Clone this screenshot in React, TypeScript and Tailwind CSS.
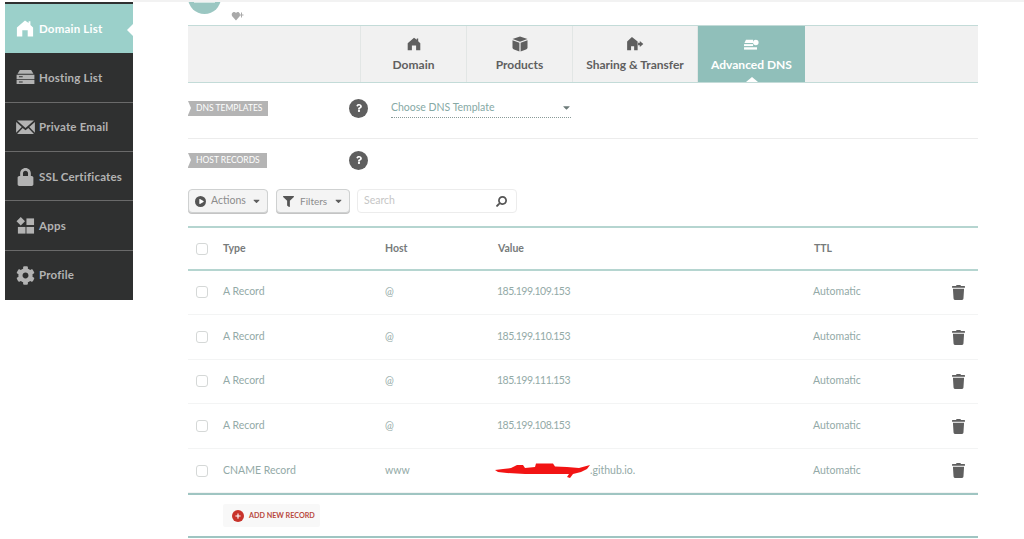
import { FaLock, FaCog, FaFilter, FaSearch, FaTrash, FaPlay, FaCaretDown, FaPlus, FaQuestion } from "react-icons/fa";

const FONT = "font-['Lato','Open_Sans',sans-serif]";

const HomeIcon = ({ className }: { className: string }) => (
	<svg viewBox="0 0 20 20" className={className} fill="currentColor">
		<path d="M10 1 L14 4 V2 H16 V6 L19 9 V19 H13 V12 H7 V19 H1 V9 Z" />
	</svg>
);

const ServerIcon = ({ className }: { className: string }) => (
	<svg viewBox="0 0 20 16" className={className} fill="currentColor">
		<path d="M4 0 H16 L18.5 4 H1.5 Z" />
		<path d="M0.5 5 H19.5 V9.5 H0.5 Z M3 6.6 V7.8 H7 V6.6 Z" fillRule="evenodd" />
		<path d="M0.5 10.5 H19.5 V15 H0.5 Z M3 12.2 V13.4 H7 V12.2 Z" fillRule="evenodd" />
	</svg>
);

const MailIcon = ({ className }: { className: string }) => (
	<svg viewBox="0 0 20 16" className={className} fill="currentColor">
		<path d="M1 0.5 H19 L10 8.5 Z" />
		<path d="M0 2 L6 7.5 L0 13.5 Z" />
		<path d="M20 2 L14 7.5 L20 13.5 Z" />
		<path d="M7 8.5 L10 11 L13 8.5 L19 15 H1 Z" />
	</svg>
);

const AppsIcon = ({ className }: { className: string }) => (
	<svg viewBox="0 0 20 20" className={className} fill="currentColor">
		<path d="M5 0.5 L9.5 5 L5 9.5 L0.5 5 Z" />
		<rect x="11" y="2" width="8" height="7" />
		<rect x="2" y="11" width="8" height="7" />
		<rect x="11" y="11" width="8" height="7" />
	</svg>
);

const BoxIcon = ({ className }: { className: string }) => (
	<svg viewBox="0 0 16 16" className={className} fill="currentColor">
		<path d="M8 0.5 L15.5 3 L8 5.8 L0.5 3 Z" />
		<path d="M0.5 4.2 L7.4 6.8 V15.5 L2 13.6 Q0.5 13 0.5 11.5 Z" />
		<path d="M15.5 4.2 L8.6 6.8 V15.5 L14 13.6 Q15.5 13 15.5 11.5 Z" />
	</svg>
);

const ShareIcon = ({ className }: { className: string }) => (
	<svg viewBox="0 0 20 16" className={className} fill="currentColor">
		<path d="M6.5 0 L13 5 V15 H9 V10.5 H5.5 V15 H1 V5 Z" />
		<path d="M13.5 6.5 H15.5 V4.5 L19.5 8 L15.5 11.5 V9.5 H13.5 Z" />
	</svg>
);

const DnsIcon = ({ className }: { className: string }) => (
	<svg viewBox="0 0 20 14" className={className} fill="currentColor">
		<path d="M3 1 H12 V5 H1 Z" />
		<path d="M0.5 6.5 H12 V9 H0.5 Z" />
		<path d="M0.5 10.5 H17 V13.5 H0.5 Z" />
		<circle cx="15.5" cy="4.5" r="3.5" />
	</svg>
);

const HeartPlus = ({ className }: { className: string }) => (
	<svg viewBox="0 0 12 10" className={className} fill="currentColor">
		<path d="M4.5 9.5 L0.5 5 Q-0.5 2 2 1 Q3.7 0.6 4.5 2 Q5.5 0.6 7 1 Q9 2 8.4 5 Z" />
		<path d="M9.5 1.5 H10.5 V3.5 H12 V4.5 H10.5 V6.5 H9.5 V4.5 H8 V3.5 H9.5 Z" />
	</svg>
);

const navItems = [
	{ label: "Hosting List", h: "h-[49px]", icon: <ServerIcon className="h-[15px] w-[19px]" /> },
	{ label: "Private Email", h: "h-[49px]", icon: <MailIcon className="h-[15px] w-[19px]" /> },
	{ label: "SSL Certificates", h: "h-[49px] pt-px", icon: <FaLock className="h-[18px] w-[17px]" /> },
	{ label: "Apps", h: "h-[50px]", icon: <AppsIcon className="h-[20px] w-[19px]" /> },
	{ label: "Profile", h: "h-[50px] pb-px", icon: <FaCog className="h-[19px] w-[19px]" /> },
];

const records = [
	{ type: "A Record", host: "@", value: "185.199.109.153", h: "h-[44px] pb-px" },
	{ type: "A Record", host: "@", value: "185.199.110.153", h: "h-[45px]" },
	{ type: "A Record", host: "@", value: "185.199.111.153", h: "h-[44px] pb-px" },
	{ type: "A Record", host: "@", value: "185.199.108.153", h: "h-[45px]" },
];

function Sidebar() {
	return (
		<aside className="mt-[2px] ml-[5px] w-[128px] shrink-0 self-start border-t-2 border-[#2f3030] bg-[#2f3030]">
			<div className="relative flex h-[49px] items-center bg-[#9bd0ca] pl-[11px] text-white">
				<HomeIcon className="h-[19px] w-[18px]" />
				<span className="ml-[5px] text-[11.5px] font-bold tracking-[0.2px]">Domain List</span>
				<span className="absolute top-[20px] right-0 h-0 w-0 border-y-[6px] border-r-[6px] border-y-transparent border-r-white" />
			</div>
			{navItems.map((item, i) => (
				<div
					key={item.label}
					className={`flex ${item.h} items-center pl-[10px] text-[#b3b3b3] ${i > 0 ? "border-t border-[#6a6a6a]" : ""}`}
				>
					<span className="flex w-[20px] justify-center">{item.icon}</span>
					<span className="ml-[4px] text-[11.5px] font-bold tracking-[0.2px] whitespace-nowrap">{item.label}</span>
				</div>
			))}
		</aside>
	);
}

function Tab({ label, icon, w, active }: { label: string; icon: React.ReactNode; w: string; active?: boolean }) {
	return (
		<div
			className={`relative flex ${w} flex-col items-center pt-[10px] ${active ? "bg-[#90bfba] text-white" : "border-r border-[#e2e6e5] text-[#5f5f5f]"}`}
		>
			<div className="flex h-[16px] items-center">{icon}</div>
			<span className="mt-[4px] text-[12px] font-bold whitespace-nowrap">{label}</span>
			{active && (
				<span className="absolute bottom-0 left-1/2 -ml-[6px] h-0 w-0 border-x-[6px] border-b-[5px] border-x-transparent border-b-white" />
			)}
		</div>
	);
}

function Ribbon({ text, w }: { text: string; w: string }) {
	return (
		<div className={`relative flex h-[15px] ${w} items-center bg-[#b4b4b4] pl-[8px] text-[8.5px] text-white`}>
			<span className="absolute top-0 left-0 h-0 w-0 border-y-[7.5px] border-l-[3px] border-y-transparent border-l-white" />
			{text}
		</div>
	);
}

function Help() {
	return (
		<span className="flex h-[19px] w-[19px] items-center justify-center rounded-full bg-[#5f5f5f] text-white">
			<FaQuestion className="h-[8px] w-[8px]" />
		</span>
	);
}

function Checkbox() {
	return <span className="ml-[8px] block h-[12px] w-[12px] rounded-[3px] border border-[#d5d8d7] bg-white" />;
}

function Row({ type, host, value, h, scribble }: { type: string; host: string; value: string; h: string; scribble?: boolean }) {
	return (
		<div className={`flex ${h} items-center border-b border-[#f3f4f4] text-[10.5px] text-[#93aaa7]`}>
			<div className="w-[35px]">
				<Checkbox />
			</div>
			<div className="w-[162px]">{type}</div>
			<div className="w-[112px]">{host}</div>
			<div className="relative w-[316px] tracking-[-0.5px]">
				{value}
				{scribble && (
					<>
						<span className="ml-[93px] tracking-normal">.github.io.</span>
						<svg viewBox="0 0 96 16" className="absolute top-0 left-[-2px] h-[16px] w-[96px]" fill="#f21414">
							<path d="M0 7 L8 6 L16 5 L22 2 L28 2 L30 5 L40 4 L41 0.5 L58 0.5 L60 3.5 L72 4 L84 5 L95 2 L92 6 L86 9 L78 11 L75 15 L72 14 L74 11 L56 11 L30 11 L12 10 L3 9 Z" />
						</svg>
					</>
				)}
			</div>
			<div className="w-[139px]">Automatic</div>
			<FaTrash className="h-[15px] w-[13px] text-[#5f5f5f]" />
		</div>
	);
}

export default function App() {
	return (
		<div className={`relative flex h-[539px] w-[1024px] overflow-hidden bg-white ${FONT}`}>
			<Sidebar />
			<main className="ml-[55px] w-[790px] shrink-0">
				<div className="flex h-[25px] overflow-hidden">
					<span className="relative -mt-[19px] h-[33px] w-[33px] rounded-full bg-[#9bc7c2]">
						<span className="absolute top-[20px] left-[6px] h-[2px] w-[21px] bg-[#d5e8e5]" />
					</span>
					<HeartPlus className="mt-[11px] ml-[10px] h-[10px] w-[13px] text-[#a9a9a9]" />
				</div>
				<div className="flex h-[58px] border-y border-[#c3dbd8] bg-[#f1f1f1]">
					<div className="w-[173px] border-r border-[#e2e6e5]" />
					<Tab label="Domain" w="w-[106px]" icon={<HomeIcon className="h-[14px] w-[14px]" />} />
					<Tab label="Products" w="w-[106px]" icon={<BoxIcon className="h-[16px] w-[16px]" />} />
					<Tab label="Sharing & Transfer" w="w-[125px]" icon={<ShareIcon className="h-[14px] w-[18px]" />} />
					<Tab label="Advanced DNS" w="w-[107px]" active icon={<DnsIcon className="h-[11px] w-[17px]" />} />
				</div>
				<div className="flex h-[56px] items-center border-b border-[#ececec] pb-[5px]">
					<Ribbon text="DNS TEMPLATES" w="w-[80px]" />
					<div className="ml-[81px]">
						<Help />
					</div>
					<div className="ml-[23px] flex h-[19px] w-[180px] items-center justify-between border-b border-dotted border-[#8a9a98] text-[10.5px] text-[#86a9a5]">
						Choose DNS Template
						<FaCaretDown className="h-[11px] w-[9px] text-[#6d7b79]" />
					</div>
				</div>
				<div className="flex h-[42px] items-center">
					<Ribbon text="HOST RECORDS" w="w-[79px]" />
					<div className="ml-[82px]">
						<Help />
					</div>
				</div>
				<div className="flex h-[45px] items-start pt-[8px] text-[10.5px] text-[#8c8c8c]">
					<div className="flex h-[24px] w-[80px] items-center rounded-[4px] border border-[#cfd1d1] bg-[#f4f4f4] pl-[6px] shadow-[0_1px_0_#c4c4c4]">
						<span className="flex h-[11px] w-[11px] items-center justify-center rounded-full bg-[#555]">
							<FaPlay className="ml-px h-[5px] w-[5px] text-white" />
						</span>
						<span className="ml-[5px]">Actions</span>
						<FaCaretDown className="ml-[6px] h-[10px] w-[9px] text-[#5f5f5f]" />
					</div>
					<div className="ml-[8px] flex h-[24px] w-[74px] items-center rounded-[4px] border border-[#cfd1d1] bg-[#f4f4f4] pl-[6px] shadow-[0_1px_0_#c4c4c4]">
						<FaFilter className="h-[11px] w-[11px] text-[#555]" />
						<span className="ml-[6px] text-[10px]">Filters</span>
						<FaCaretDown className="ml-[7px] h-[10px] w-[9px] text-[#5f5f5f]" />
					</div>
					<div className="ml-[7px] flex h-[24px] w-[160px] items-center justify-between rounded-[4px] border border-[#ececec] pr-[9px] pl-[6px] text-[#c6c6c6]">
						Search
						<FaSearch className="h-[11px] w-[11px] -scale-x-100 text-[#555]" />
					</div>
				</div>
				<div className="flex h-[45px] items-center border-y-2 border-[#b5d5d0] text-[10.5px] font-bold text-[#777b7b]">
					<div className="w-[35px]">
						<Checkbox />
					</div>
					<div className="w-[162px]">Type</div>
					<div className="w-[113px]">Host</div>
					<div className="w-[316px]">Value</div>
					<div>TTL</div>
				</div>
				{records.map((r) => (
					<Row key={r.value} {...r} />
				))}
				<div className="border-b-2 border-[#9fc5c2]">
					<Row type="CNAME Record" host="www" value="" h="h-[44px]" scribble />
				</div>
				<div className="flex h-[43px] items-center border-b-2 border-[#9fc5c2] pl-[35px]">
					<div className="flex h-[23px] w-[97px] items-center rounded-[2px] bg-[#f8f8f8] pl-[9px]">
						<span className="flex h-[12px] w-[12px] items-center justify-center rounded-full bg-[#c8332b]">
							<FaPlus className="h-[6px] w-[6px] text-white" />
						</span>
						<span className="mt-px ml-[5px] text-[7.2px] font-bold whitespace-nowrap text-[#b9493f]">ADD NEW RECORD</span>
					</div>
				</div>
			</main>
			<div className="absolute top-0 right-0 left-[133px] h-[2px] bg-[#f2f2f2]" />
		</div>
	);
}
